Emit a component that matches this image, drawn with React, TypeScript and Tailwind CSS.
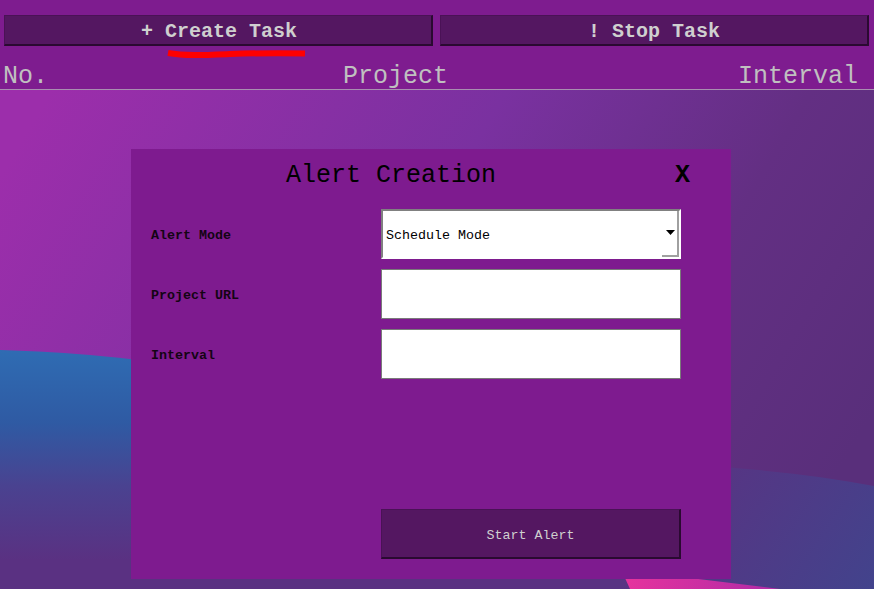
import React from "react";

const mono = "font-['Courier_New','Nimbus_Mono_PS','FreeMono','Liberation_Mono',monospace]";

function Background() {
  return (
    <svg
      className="absolute inset-0 w-full h-full"
      viewBox="0 0 874 589"
      preserveAspectRatio="none"
    >
      <defs>
        <linearGradient id="bg" x1="0" y1="0.3" x2="1" y2="0.7">
          <stop offset="0" stopColor="#9c2eab" />
          <stop offset="0.45" stopColor="#7a31a0" />
          <stop offset="0.75" stopColor="#632f83" />
          <stop offset="1" stopColor="#592f7b" />
        </linearGradient>
        <linearGradient id="blue" x1="0" y1="350" x2="0" y2="560" gradientUnits="userSpaceOnUse">
          <stop offset="0" stopColor="#2f6cb3" />
          <stop offset="0.35" stopColor="#2f5aa3" />
          <stop offset="0.65" stopColor="#4a4290" />
          <stop offset="1" stopColor="#5a3182" />
        </linearGradient>
        <linearGradient id="blue2" x1="700" y1="470" x2="874" y2="589" gradientUnits="userSpaceOnUse">
          <stop offset="0" stopColor="#583483" />
          <stop offset="1" stopColor="#42438c" />
        </linearGradient>
        <linearGradient id="pink" x1="625" y1="578" x2="760" y2="589" gradientUnits="userSpaceOnUse">
          <stop offset="0" stopColor="#e6339d" />
          <stop offset="1" stopColor="#b62ca6" />
        </linearGradient>
      </defs>
      <rect x="0" y="0" width="874" height="589" fill="url(#bg)" />
      <path d="M0,350 C70,352 131,357 220,372 L640,450 L640,589 L0,589 Z" fill="url(#blue)" />
      <path d="M600,462 C700,464 790,470 874,486 L874,589 L600,589 Z" fill="url(#blue2)" />
      <path d="M625,578 L690,578 L780,589 L630,589 Z" fill="url(#pink)" />
    </svg>
  );
}

const btn =
  "bg-[#541761] border-t border-l border-[#4a1256] border-b-2 border-r-2 border-b-[#2a0a31] border-r-[#2a0a31] text-[#cfcfcf]";

export default function App() {
  return (
    <div className={`relative w-[874px] h-[589px] overflow-hidden ${mono}`}>
      <Background />
      <div className="relative flex flex-col">
        {/* Header */}
        <div className="bg-[#7e1c8f] border-b border-[#a88fb0]">
          <div className="grid grid-cols-2 gap-[7px] pl-[4px] pr-[5px] pt-[15px]">
            <button className={`h-[31px] ${btn} text-[20px] font-bold leading-none`}>
              <span className="inline-block translate-y-[2px] translate-x-[1px]">+ Create Task</span>
            </button>
            <button className={`h-[31px] ${btn} text-[20px] font-bold leading-none`}>
              <span className="inline-block translate-y-[2px]">! Stop Task</span>
            </button>
          </div>
          <div className="mt-[15px] flex h-[28px] items-center text-[25px] leading-[28px] text-[#c0c0c0]">
            <span className="w-[343px] pl-[3px] translate-y-[2px]">No.</span>
            <span className="translate-y-[2px]">Project</span>
            <span className="ml-auto pr-[16px] translate-y-[2px]">Interval</span>
          </div>
        </div>

        {/* Modal */}
        <div className="ml-[131px] mt-[59px] w-[600px] h-[430px] bg-[#7e1b8f] flex flex-col">
          <div className="flex items-center pt-[10px] h-[40px]">
            <div className="ml-[50px] w-[420px] text-center text-[25px] leading-[30px] text-black translate-y-[2px]">
              Alert Creation
            </div>
            <div className="ml-auto mr-[41px] text-[25px] leading-[30px] font-bold text-black translate-y-[2px]">X</div>
          </div>

          <div className="mt-[20px] flex flex-col gap-[10px] pl-[20px] pr-[50px]">
            <div className="flex items-center h-[50px]">
              <label className="w-[230px] text-[13.33px] font-bold text-[#140414] translate-y-[2px]">Alert Mode</label>
              <div className="relative w-[300px] h-[50px] bg-white border-t-2 border-l-2 border-t-[#808080] border-l-[#808080] border-r-2 border-b-2 border-r-white border-b-white flex items-center">
                <span className="pl-[3px] text-[13.33px] text-black translate-y-[2px]">Schedule Mode</span>
                <div className="absolute right-0 bottom-0 w-[17px] h-[46px] border-r-2 border-b-2 border-r-[#a0a0a0] border-b-[#a0a0a0] flex items-center justify-center">
                  <svg width="9" height="5" viewBox="0 0 9 5" className="mb-[1px] ml-[2px]">
                    <path d="M0,0 L9,0 L4.5,5 Z" fill="#000" />
                  </svg>
                </div>
              </div>
            </div>
            <div className="flex items-center h-[50px]">
              <label className="w-[230px] text-[13.33px] font-bold text-[#140414] translate-y-[2px]">Project URL</label>
              <div className="w-[300px] h-[50px] bg-white border border-[#7a7a7a]" />
            </div>
            <div className="flex items-center h-[50px]">
              <label className="w-[230px] text-[13.33px] font-bold text-[#140414] translate-y-[2px]">Interval</label>
              <div className="w-[300px] h-[50px] bg-white border border-[#7a7a7a]" />
            </div>
          </div>

          <div className="mt-[130px] pl-[250px]">
            <button className={`w-[300px] h-[50px] ${btn} text-[13.33px]`}>
              <span className="inline-block translate-y-[2px]">Start Alert</span>
            </button>
          </div>
        </div>
      </div>

      {/* red annotation underline */}
      <svg className="absolute left-0 top-0" width="874" height="70" viewBox="0 0 874 70">
        <path
          d="M168,53 C185,56 205,55 230,54 C260,53 285,53 305,53.5"
          stroke="#ff0000"
          strokeWidth="6"
          fill="none"
          strokeLinecap="butt"
        />
      </svg>
    </div>
  );
}
